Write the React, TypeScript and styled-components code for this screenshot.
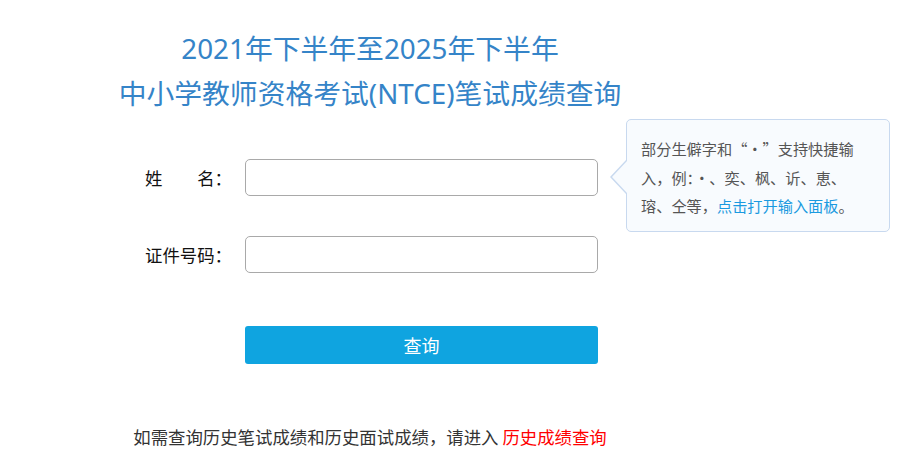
import React from "react";
import styled, { createGlobalStyle } from "styled-components";

const GlobalStyle = createGlobalStyle`
  html, body {
    margin: 0;
    padding: 0;
    background: #ffffff;
  }
  body {
    font-family: "Noto Sans", "Noto Sans CJK SC", sans-serif;
  }
  * { box-sizing: border-box; }
`;

const Page = styled.div`
  width: 740px;
  padding-top: 26px;
`;

const Title = styled.h1`
  margin: 0;
  font-weight: 400;
  font-size: 27.8px;
  line-height: 44.5px;
  color: #3584c8;
  text-align: center;
  font-family: "Noto Sans", "Noto Sans CJK SC", sans-serif;
`;

const TitleLine = styled.div`
  white-space: nowrap;
`;

const Form = styled.form`
  margin: 44px 0 0 145px;
  width: 453px;
  display: flex;
  flex-direction: column;
`;

const Row = styled.div<{ $gap?: number }>`
  position: relative;
  display: grid;
  grid-template-columns: 100px 353px;
  align-items: center;
  margin-top: ${(p) => p.$gap ?? 0}px;
`;

const Label = styled.label`
  font-size: 17.4px;
  line-height: 24px;
  color: #111;
  white-space: pre;
  font-family: "Noto Sans CJK SC", sans-serif;
`;

const Input = styled.input`
  width: 353px;
  height: 37px;
  border: 1px solid #a9a9a9;
  border-radius: 5px;
  background: #fff;
  padding: 0 10px;
  font-size: 16px;
  outline: none;
`;

const Button = styled.button`
  grid-column: 2;
  width: 353px;
  height: 38px;
  border: none;
  border-radius: 3px;
  background: #0fa4e0;
  color: #fff;
  font-size: 18px;
  font-family: "Noto Sans CJK SC", sans-serif;
  cursor: pointer;
  padding: 0;
`;

const Tip = styled.div`
  position: absolute;
  left: calc(100% + 28px);
  top: -40px;
  width: 264px;
  padding: 14px 30px 11px 14px;
  background: #f8fbfe;
  border: 1px solid #c8d9ef;
  border-radius: 5px;
  font-size: 15.2px;
  line-height: 28.5px;
  color: #555;
  font-family: "Noto Sans CJK SC", sans-serif;

  &::before,
  &::after {
    content: "";
    position: absolute;
    width: 0;
    height: 0;
    border-style: solid;
  }
  &::before {
    left: -17px;
    top: 40px;
    border-width: 17px 16px 17px 0;
    border-color: transparent #c8d9ef transparent transparent;
  }
  &::after {
    left: -15px;
    top: 41px;
    border-width: 16px 15px 16px 0;
    border-color: transparent #f8fbfe transparent transparent;
  }
`;

const TipLink = styled.a`
  color: #1a9ae0;
  text-decoration: none;
  cursor: pointer;
`;

const Footer = styled.p`
  margin: 61px 0 0;
  text-align: center;
  font-size: 17.4px;
  line-height: 24px;
  color: #333;
  font-family: "Noto Sans CJK SC", sans-serif;
  white-space: nowrap;
`;

const HistoryLink = styled.a`
  color: #ff0000;
  text-decoration: none;
  cursor: pointer;
`;

export default function App() {
  return (
    <>
      <GlobalStyle />
      <Page>
        <Title>
          <TitleLine>2021年下半年至2025年下半年</TitleLine>
          <TitleLine>中小学教师资格考试(NTCE)笔试成绩查询</TitleLine>
        </Title>
        <Form onSubmit={(e) => e.preventDefault()}>
          <Row>
            <Label htmlFor="name">姓　　名：</Label>
            <Input id="name" type="text" />
            <Tip>
              部分生僻字和“·”支持快捷输入，例：·、奕、枫、䜣、恵、瑢、仝等，
              <TipLink>点击打开输入面板</TipLink>。
            </Tip>
          </Row>
          <Row $gap={40}>
            <Label htmlFor="idno">证件号码：</Label>
            <Input id="idno" type="text" />
          </Row>
          <Row $gap={53}>
            <Button type="submit">查询</Button>
          </Row>
        </Form>
        <Footer>
          如需查询历史笔试成绩和历史面试成绩，请进入 <HistoryLink>历史成绩查询</HistoryLink>
        </Footer>
      </Page>
    </>
  );
}
